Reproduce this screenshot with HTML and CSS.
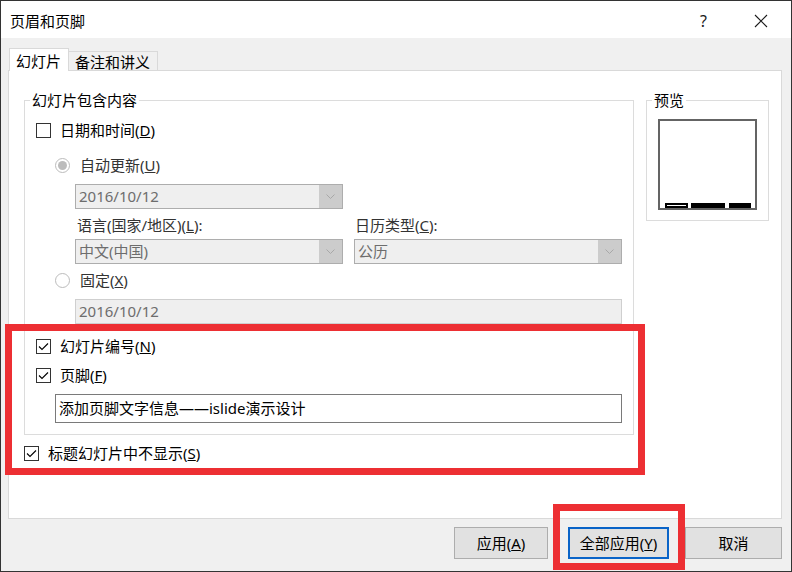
FILE: index.html
```html
<!DOCTYPE html>
<html lang="zh-CN">
<head>
<meta charset="utf-8">
<title>页眉和页脚</title>
<link rel="stylesheet" href="styles.css">
</head>
<body>
<div class="window">
  <div class="titlebar">
    <span class="title">页眉和页脚</span>
    <span class="help">?</span>
    <svg class="close" width="14" height="14" viewBox="0 0 14 14"><path d="M1 1 L13 13 M13 1 L1 13" stroke="#1a1a1a" stroke-width="1.1" fill="none"/></svg>
  </div>
  <div class="body">
    <div class="tabs">
      <div class="tab active">幻灯片</div>
      <div class="tab">备注和讲义</div>
    </div>
    <div class="panel">
      <div class="panel-top">
        <fieldset class="group content-group">
          <legend>幻灯片包含内容</legend>
          <div class="check row-date"><span class="box"></span><span>日期和时间(<u>D</u>)</span></div>
          <div class="radio row-auto"><span class="dot on"></span><span>自动更新(<u>U</u>)</span></div>
          <div class="select sel-date"><span class="val">2016/10/12</span><span class="arrow"><svg width="9" height="5" viewBox="0 0 9 5"><path d="M0.5 0.5 L4.5 4.5 L8.5 0.5" stroke="#a8a8a8" fill="none"/></svg></span></div>
          <div class="labels"><span class="lab">语言(国家/地区)(<u>L</u>):</span><span class="lab">日历类型(<u>C</u>):</span></div>
          <div class="sel-row">
            <div class="select"><span class="val">中文(中国)</span><span class="arrow"><svg width="9" height="5" viewBox="0 0 9 5"><path d="M0.5 0.5 L4.5 4.5 L8.5 0.5" stroke="#a8a8a8" fill="none"/></svg></span></div>
            <div class="select"><span class="val">公历</span><span class="arrow"><svg width="9" height="5" viewBox="0 0 9 5"><path d="M0.5 0.5 L4.5 4.5 L8.5 0.5" stroke="#a8a8a8" fill="none"/></svg></span></div>
          </div>
          <div class="radio row-fixed"><span class="dot"></span><span>固定(<u>X</u>)</span></div>
          <div class="input fixed">2016/10/12</div>
          <div class="check row-num"><span class="box"><svg width="13" height="13" viewBox="0 0 13 13"><path d="M2 6.5 L5 9.5 L11 3.5" stroke="#000" stroke-width="1.1" fill="none"/></svg></span><span>幻灯片编号(<u>N</u>)</span></div>
          <div class="check row-footer"><span class="box"><svg width="13" height="13" viewBox="0 0 13 13"><path d="M2 6.5 L5 9.5 L11 3.5" stroke="#000" stroke-width="1.1" fill="none"/></svg></span><span>页脚(<u>F</u>)</span></div>
          <div class="input footer">添加页脚文字信息——islide演示设计</div>
        </fieldset>
        <fieldset class="group preview-group">
          <legend>预览</legend>
          <div class="preview">
            <span class="bar outline"></span>
            <span class="bar mid"></span>
            <span class="bar end"></span>
          </div>
        </fieldset>
      </div>
      <div class="check row-title"><span class="box"><svg width="13" height="13" viewBox="0 0 13 13"><path d="M2 6.5 L5 9.5 L11 3.5" stroke="#000" stroke-width="1.1" fill="none"/></svg></span><span>标题幻灯片中不显示(<u>S</u>)</span></div>
    </div>
    <div class="buttons">
      <div class="btn btn-apply">应用(<u>A</u>)</div>
      <div class="btn btn-all">全部应用(<u>Y</u>)</div>
      <div class="btn btn-cancel">取消</div>
    </div>
  </div>
  <div class="mark mark-1"></div>
  <div class="mark mark-2"></div>
</div>
</body>
</html>
```
FILE: styles.css
```css
* { box-sizing: border-box; }
html, body { margin: 0; padding: 0; }
body {
  font-family: "Noto Sans", "Noto Sans CJK SC", sans-serif;
  font-size: 15px;
  color: #000;
  background: #fff;
}
.window {
  position: relative;
  width: 792px;
  height: 572px;
  border: 1px solid #333;
  display: flex;
  flex-direction: column;
  background: #f0f0f0;
}
.titlebar {
  height: 37px;
  background: #fff;
  display: flex;
  align-items: center;
  padding-left: 9px;
  padding-top: 2px;
}
.title { line-height: 20px; flex: 1; }
.help { font-size: 16px; line-height: 20px; margin-right: 47px; color: #1a1a1a; }
.close { margin-right: 23px; }
.body {
  flex: 1;
  padding: 10px 9px 0 7px;
  display: flex;
  flex-direction: column;
}
.tabs {
  display: flex;
  align-items: flex-end;
  margin-bottom: -1px;
  padding-left: 1px;
  position: relative;
  z-index: 1;
}
.tab {
  height: 19px;
  margin-bottom: 1px;
  border: 1px solid #d9d9d9;
  border-bottom: none;
  border-left: none;
  background: #f0f0f0;
  padding: 0 7px 0 6px;
  line-height: 20px;
  font-size: 15px;
}
.tab.active {
  height: 23px;
  margin-bottom: 0;
  background: #fff;
  border-left: 1px solid #d9d9d9;
  padding: 2px 7px 0 6px;
  line-height: 20px;
}
.panel {
  height: 449px;
  background: #fff;
  border: 1px solid #d9d9d9;
  padding: 21px 0 0 15px;
}
.panel-top { display: flex; align-items: flex-start; gap: 12px; }
.group {
  margin: 0;
  border: 1px solid #dcdcdc;
  min-width: 0;
}
.group legend {
  margin-left: -6px;
  padding: 0 2px;
  line-height: 16px;
  font-size: 15px;
}
.content-group {
  width: 610px;
  padding: 0 0 11px 11px;
  display: flex;
  flex-direction: column;
}
.check, .radio {
  display: flex;
  align-items: center;
  height: 20px;
  line-height: 20px;
}
.box {
  width: 15px;
  height: 15px;
  border: 1px solid #333;
  background: #fff;
  margin-right: 9px;
  display: flex;
  align-items: center;
  justify-content: center;
  flex: none;
}
.dot {
  width: 15px;
  height: 15px;
  border-radius: 50%;
  border: 1px solid #bcbcbc;
  background: #fff;
  margin-right: 10px;
  display: flex;
  align-items: center;
  justify-content: center;
  flex: none;
}
.dot.on::after {
  content: "";
  width: 9px;
  height: 9px;
  border-radius: 50%;
  background: #bcbcbc;
}
.radio { margin-left: 19px; color: #333; }
.row-date { margin-top: 12px; }
.row-auto { margin-top: 15px; }
.select {
  display: flex;
  width: 268px;
  height: 25px;
  border: 1px solid #adadad;
  background: #efefef;
  color: #6d6d6d;
}
.select .val { flex: 1; line-height: 23px; padding-left: 3px; }
.select .arrow {
  width: 23px;
  background: #cccccc;
  display: flex;
  align-items: center;
  justify-content: center;
}
.sel-date { margin-top: 9px; margin-left: 39px; }
.labels {
  margin-top: 8px;
  margin-left: 39px;
  display: flex;
  gap: 11px;
  height: 16px;
  line-height: 16px;
  color: #333;
}
.lab { width: 268px; padding-left: 2px; }
.lab + .lab { padding-left: 1px; }
.sel-row { margin-top: 6px; margin-left: 39px; display: flex; gap: 11px; }
.row-fixed { margin-top: 6px; }
.input {
  height: 25px;
  border: 1px solid #adadad;
  line-height: 23px;
  padding-left: 3px;
}
.input.fixed {
  margin-top: 9px;
  margin-left: 39px;
  width: 547px;
  background: #efefef;
  border-color: #cfcfcf;
  color: #6d6d6d;
}
.row-num { margin-top: 12px; }
.row-footer { margin-top: 9px; }
.input.footer {
  margin-top: 9px;
  margin-left: 19px;
  width: 567px;
  height: 29px;
  line-height: 27px;
  border-color: #7a7a7a;
  background: #fff;
}
.preview-group {
  width: 123px;
  padding: 0 0 10px 11px;
}
.preview {
  margin-top: 11px;
  width: 99px;
  height: 91px;
  border: 2px solid #646464;
  display: flex;
  align-items: flex-end;
  padding: 0 4px 0 5px;
}
.bar { height: 5px; background: #000; display: block; }
.bar.outline { width: 23px; background: #fff; border: 2px solid #000; }
.bar.mid { width: 34px; margin-left: 3px; }
.bar.end { width: 22px; margin-left: 4px; }
.row-title { margin-top: 8px; }
.row-title .box { margin-right: 9px; }
.buttons {
  margin-top: 8px;
  display: flex;
  justify-content: flex-end;
}
.btn {
  height: 32px;
  background: #e1e1e1;
  border: 1px solid #adadad;
  display: flex;
  align-items: center;
  justify-content: center;
  line-height: 20px;
}
.btn-apply { width: 94px; }
.btn-all { width: 101px; margin-left: 20px; border: 2px solid #0a64c8; }
.btn-cancel { width: 97px; margin-left: 16px; }
.mark {
  position: absolute;
  border: 7px solid #ed2f33;
}
.mark-1 { left: 4px; top: 323px; width: 640px; height: 151px; }
.mark-2 { left: 552px; top: 503px; width: 132px; height: 66px; }
```
